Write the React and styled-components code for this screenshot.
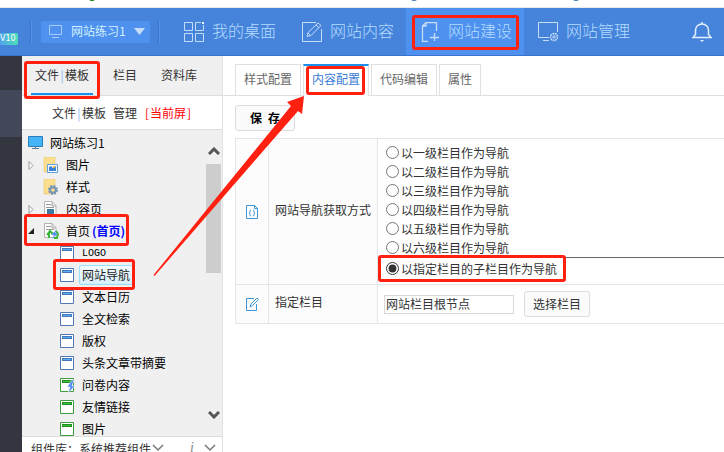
import React, { useState } from 'react'
import styled, { createGlobalStyle, css } from 'styled-components'

const navItems = [
    { key: 'desktop', label: '我的桌面' },
    { key: 'content', label: '网站内容' },
    { key: 'build', label: '网站建设' },
    { key: 'manage', label: '网站管理' },
]

const treeItems = [
    { label: '网站练习', num: '1', icon: 'monitor', level: 0 },
    { label: '图片', icon: 'images', level: 1, arrow: 'closed' },
    { label: '样式', icon: 'styles', level: 1 },
    { label: '内容页', icon: 'page', level: 1, arrow: 'closed' },
    { label: '首页', note: '(首页)', icon: 'home', level: 1, arrow: 'open', mark: '-6px 92px -4px 2px' },
    { label: 'LOGO', icon: 'blue', level: 2, mono: true },
    { label: '网站导航', icon: 'blue', level: 2, selected: true, mark: '-5px 86px -4px 31px' },
    { label: '文本日历', icon: 'blue', level: 2 },
    { label: '全文检索', icon: 'blue', level: 2 },
    { label: '版权', icon: 'blue', level: 2 },
    { label: '头条文章带摘要', icon: 'blue', level: 2 },
    { label: '问卷内容', icon: 'bolt', level: 2 },
    { label: '友情链接', icon: 'green', level: 2 },
    { label: '图片', icon: 'green', level: 2 },
]

const configTabs = ['样式配置', '内容配置', '代码编辑', '属性']

const navModes = [
    '以一级栏目作为导航',
    '以二级栏目作为导航',
    '以三级栏目作为导航',
    '以四级栏目作为导航',
    '以五级栏目作为导航',
    '以六级栏目作为导航',
]
const customMode = '以指定栏目的子栏目作为导航'

function NavIcon({ name }) {
    return (
        <svg width="20" height="20" viewBox="0 0 20 20" fill="none" stroke="#c6ddfa">
            {name === 'desktop' && (
                <>
                    <path d="M.5 .5h8v8h-8zM.5 11.5h8v8h-8zM11.5 11.5h8v8h-8zM17 .5h-5.500v8h8V3" />
                    <path d="M18 0h2v2h-2z" fill="#e8f2ff" stroke="none" />
                </>
            )}
            {name === 'content' && (
                <>
                    <path d="M14 .5H.5v19h19V7" />
                    <path d="M5 14.500l1-4L16 1l3 2.500L9 13.500zM14 3l3 3M6 11l2.500 2.500" />
                </>
            )}
            {name === 'build' && (
                <path d="M8 19.500H2.500V4L6 .5h10.500V9M6 .5V4H2.500M14.500 11v8M10 15.500h9" strokeWidth="1.3" />
            )}
            {name === 'manage' && (
                <>
                    <path d="M11 15.500H.5V.5h19V10M5 18.500h6" />
                    <circle cx="16" cy="15" r="3.500" strokeWidth="1.500" strokeDasharray="1.800 .6" />
                    <circle cx="16" cy="15" r="1.200" />
                </>
            )}
        </svg>
    )
}

function TreeIcon({ name }) {
    if (name === 'monitor') {
        return (
            <svg width="16" height="16" viewBox="0 0 16 16">
                <path d="M.5 1.500h14v10H.5z" fill="#45b5f7" stroke="#2a7fb8" />
                <path d="M7 12h1v1h3v1H4v-1h3z" fill="#5a7f9c" />
            </svg>
        )
    }
    if (name === 'images' || name === 'styles') {
        return (
            <svg width="16" height="16" viewBox="0 0 16 16">
                <path d="M1 0h11v15H1z" fill="#fbdf8e" stroke="#efcb68" strokeWidth=".6" />
                {name === 'images' ? (
                    <>
                        <path d="M4.500 7.500h10v8h-10z" fill="#fff" stroke="#5b9ee0" />
                        <path d="M6 14v-4l2-1 2 2 3-2v5z" fill="#3c83d3" />
                        <path d="M10 9h2v2h-2z" fill="#f4b14a" />
                    </>
                ) : (
                    <>
                        <circle cx="10" cy="11" r="4" fill="none" stroke="#7796b8" strokeWidth="2" strokeDasharray="1.900 1.240" />
                        <circle cx="10" cy="11" r="2.800" fill="none" stroke="#7796b8" strokeWidth="2" />
                    </>
                )}
            </svg>
        )
    }
    if (name === 'page' || name === 'home') {
        return (
            <svg width="16" height="16" viewBox="0 0 16 16">
                <path d="M1.500 .5H9l4 4v10H1.500z" fill="#fff" stroke="#b4b4b4" />
                <path d="M9 .5V5h4" fill="#ddd" stroke="#aaa" />
                <path d="M3 3.500h5M3 6.500h8" stroke="#999" />
                {name === 'page' ? (
                    <path d="M4 8h7v5H4z" fill="#3d789f" />
                ) : (
                    <>
                        <path d="M4 12l3-4 3 3M6 10v5M13 8l2 3-1 4h-3" fill="none" stroke="#38b838" strokeWidth="2" />
                        <path d="M13 7l-5 5h3l-2 4 6-6h-3z" fill="#5c8ff5" />
                    </>
                )}
            </svg>
        )
    }
    const blue = name === 'blue'
    return (
        <svg width="16" height="16" viewBox="0 0 16 16">
            <path d="M1.500 1.500h13v13h-13z" fill="#fff" stroke={blue ? '#5077b5' : '#3e9b3e'} />
            <path d="M3 3h10v3H3z" fill={blue ? '#4775b8' : '#238a23'} />
            <path d="M4 4h8v1H4z" fill={blue ? '#4eb2f5' : '#37c837'} />
            {name === 'bolt' && (
                <path d="M13 3l-5 7h3l-2 6 7-7h-3l2-6z" fill="#5c8ff5" stroke="#fff" strokeWidth=".5" />
            )}
        </svg>
    )
}

function Chevron({ up, color = '#555', stroke = 3 }) {
    return (
        <svg width="12" height="8" viewBox="0 0 12 8" fill="none" stroke={color} strokeWidth={stroke}>
            <path d={up ? 'M1 7l5-5 5 5' : 'M1 1l5 5 5-5'} />
        </svg>
    )
}

function Header() {
    return (
        <TopBar>
            <Version>V10</Version>
            <Divider />
            <SiteButton type="button">
                <svg width="14" height="13" viewBox="0 0 14 13" fill="none" stroke="#a6cbfa">
                    <path d="M.5 .5h12v9H.5zM3 12.500h7" />
                </svg>
                <span>网站练习1</span>
                <svg width="11" height="7" viewBox="0 0 11 7">
                    <path d="M0 0h11L5.500 7z" fill="#c6ddfa" />
                </svg>
            </SiteButton>
            <Divider />
            <Nav>
                {navItems.map(item => (
                    <NavLink key={item.key} href={`#${item.key}`} $active={item.key === 'build'}>
                        <NavIcon name={item.key} />
                        <NavText>{item.label}</NavText>
                        {item.key === 'build' && <Mark $inset="7px 5px 5px 6px" />}
                    </NavLink>
                ))}
            </Nav>
            <BellButton type="button" aria-label="消息">
                <svg width="20" height="20" viewBox="0 0 20 20" fill="none" stroke="#e3efff" strokeWidth="1.500">
                    <path d="M1 15.500h18l-2.500-3V8a6.500 6 0 0 0-13 0v4.500zM10 0v2" />
                    <path d="M8 18h4l-2 2z" fill="#e3efff" stroke="none" />
                </svg>
            </BellButton>
        </TopBar>
    )
}

function Sidebar() {
    return (
        <Side>
            <SideTabs>
                <SideTab type="button" $active>
                    文件<Bar>|</Bar>模板
                    <Mark $inset="5px -7px -6px -7px" />
                </SideTab>
                <SideTab type="button">栏目</SideTab>
                <SideTab type="button">资料库</SideTab>
            </SideTabs>
            <SideTitle>
                <span>文件<Bar>|</Bar>模板</span>
                <span>管理</span>
                <CurrentLink href="#screen"><Half>[</Half>当前屏<Half>]</Half></CurrentLink>
            </SideTitle>
            <TreeArea>
                <Tree>
                    {treeItems.map((item, i) => (
                        <TreeRow key={i} $level={item.level}>
                            {item.level === 1 && (
                                <Toggle>
                                    {item.arrow && (
                                        <svg width="7" height="9" viewBox="0 0 7 9">
                                            {item.arrow === 'open'
                                                ? <path d="M6 1v6H0z" fill="#222" />
                                                : <path d="M1 .5v8l4-4z" fill="#fff" stroke="#999" />}
                                        </svg>
                                    )}
                                </Toggle>
                            )}
                            <TreeIcon name={item.icon} />
                            <TreeLabel href="#node" $level={item.level} $selected={item.selected} $mono={item.mono}>
                                {item.label}
                                {item.num && <Half>{item.num}</Half>}
                                {item.note && <Note>{item.note}</Note>}
                            </TreeLabel>
                            {item.mark && <Mark $inset={item.mark} />}
                        </TreeRow>
                    ))}
                </Tree>
                <ScrollTrack>
                    <Chevron up />
                    <ScrollThumb />
                    <Chevron />
                </ScrollTrack>
            </TreeArea>
            <LibraryBar>
                <label htmlFor="library">组件库：</label>
                <LibrarySelect id="library">
                    <option>系统推荐组件</option>
                </LibrarySelect>
                <Chevron color="#777" stroke={1.5} />
                <Info>i</Info>
                <Chevron color="#777" stroke={1.5} />
            </LibraryBar>
        </Side>
    )
}

function Content() {
    const [mode, setMode] = useState(customMode)
    const option = label => (
        <>
            <input type="radio" name="mode" checked={mode === label} onChange={() => setMode(label)} />
            {label}
        </>
    )

    return (
        <Main>
            <Tabs>
                {configTabs.map(tab => (
                    <Tab key={tab} type="button" $active={tab === '内容配置'}>
                        {tab}
                        {tab === '内容配置' && <Mark $inset="0 3px 1px 2px" />}
                    </Tab>
                ))}
            </Tabs>
            <Body>
                <SaveButton type="button"><span>保</span><span>存</span></SaveButton>
                <ConfigTable>
                    <tbody>
                        <tr>
                            <IconCell>
                                <svg width="12" height="14" viewBox="0 0 12 14" fill="none" stroke="#3b97d8">
                                    <path d="M.5 .5h8l3 3v10H.5zM8.500 .5v3h3M5 5c-2 0 0 2.500-2 3 2 .5 0 3 2 3M7 5c2 0 0 2.500 2 3-2 .5 0 3-2 3" />
                                </svg>
                            </IconCell>
                            <LabelCell>网站导航获取方式</LabelCell>
                            <OptionCell>
                                {navModes.map(label => <Option key={label}>{option(label)}</Option>)}
                                <LastOption>
                                    {option(customMode)}
                                    <Mark $inset="-3px auto -4px 0" $width="188px" />
                                </LastOption>
                            </OptionCell>
                        </tr>
                        <tr>
                            <IconCell>
                                <svg width="13" height="15" viewBox="0 0 13 15" fill="none" stroke="#3b97d8">
                                    <path d="M8 1.500H.5v12h10V7" />
                                    <path d="M4 10l1-3 6-6 1.500 1.500-6 6z" />
                                </svg>
                            </IconCell>
                            <LabelCell><label htmlFor="column">指定栏目</label></LabelCell>
                            <td>
                                <Field>
                                    <TextInput id="column" defaultValue="网站栏目根节点" />
                                    <PickButton type="button">选择栏目</PickButton>
                                </Field>
                            </td>
                        </tr>
                    </tbody>
                </ConfigTable>
            </Body>
        </Main>
    )
}

function App() {
    return (
        <Page>
            <GlobalStyle />
            <Strip>
                <svg width="600" height="2" viewBox="0 0 600 2">
                    <path d="M89 0h6l-2 1h-2z" fill="#1a8a1a" />
                    <path d="M411 0h6l-2 1h-2zM573 0h6l-2 1h-2z" fill="#4a7fc8" />
                </svg>
            </Strip>
            <Header />
            <Columns>
                <Rail><RailItem /></Rail>
                <Sidebar />
                <Content />
            </Columns>
            <Arrow width="160" height="184" viewBox="150 94 160 184">
                <path d="M304 96L287 102l4 4L153.500 275l1 1L298 111l4 3z" fill="#ff2010" />
            </Arrow>
        </Page>
    )
}

export default App

const GlobalStyle = createGlobalStyle`
    * {
        box-sizing: border-box;
    }
    body {
        margin: 0;
        overflow: hidden;
        background: #fff;
    }
    body, button, input, select {
        font-family: "Noto Sans CJK SC", sans-serif;
        font-size: 12px;
        color: #333;
    }
    a {
        color: inherit;
        text-decoration: none;
    }
    svg {
        display: block;
        flex: none;
    }
`

const Page = styled.div`
    position: relative;
    display: flex;
    flex-direction: column;
    height: 100vh;
    overflow: hidden;
`

const Strip = styled.div`
    flex: none;
    height: 8px;
    border-bottom: 1px solid #e6eaf0;
`

/* red highlight drawn over its parent */
const Mark = styled.span`
    position: absolute;
    inset: ${props => props.$inset};
    width: ${props => props.$width || 'auto'};
    border: 3px solid #ff2010;
    border-radius: 3px;
    pointer-events: none;
    z-index: 2;
`

const Arrow = styled.svg`
    position: absolute;
    left: 150px;
    top: 94px;
    pointer-events: none;
    z-index: 3;
`

const TopBar = styled.header`
    display: flex;
    flex: none;
    align-items: center;
    height: 48px;
    background: #4684db;
    border-bottom: 1px solid #3874cf;
`

const Version = styled.span`
    width: 18px;
    margin: 14px 12px 0 0;
    border-radius: 0 2px 2px 0;
    background: linear-gradient(90deg, #52a5ec, #4be0b4);
    color: #fff;
    font: 8px/12px "DejaVu Sans", sans-serif;
`

const Divider = styled.span`
    width: 2px;
    height: 22px;
    background: #3a74c8;
    border-right: 1px solid #5793e6;
`

const SiteButton = styled.button`
    display: flex;
    align-items: center;
    gap: 8px;
    width: 109px;
    height: 22px;
    margin: 0 8px 0 9px;
    padding: 0 7px 0 8px;
    border: 0;
    border-radius: 2px;
    background: #4e91ee;
    color: #d4f0ff;
    line-height: 18px;
    white-space: nowrap;

    span {
        flex: 1;
        padding-bottom: 2px;
        text-align: left;
    }
`

const Nav = styled.nav`
    display: flex;
    align-self: stretch;
    margin-left: 10px;
`

const NavLink = styled.a`
    position: relative;
    display: flex;
    align-items: center;
    gap: 8px;
    width: 118px;
    padding-left: 14px;
    color: #b4dcff;
    background: ${props => (props.$active ? '#4e91ee' : 'transparent')};
`

const NavText = styled.span`
    padding-bottom: 4px;
    font-size: 16px;
    font-weight: 300;
    line-height: 24px;
    white-space: nowrap;
`

const BellButton = styled.button`
    margin: 0 12px 0 auto;
    padding: 0;
    border: 0;
    background: none;
`

const Columns = styled.div`
    display: flex;
    flex: 1;
    min-height: 0;
`

const Rail = styled.div`
    flex: none;
    width: 22px;
    padding-top: 34px;
    background: #33363f;
`

const RailItem = styled.div`
    height: 47px;
    background: #43475a;
`

const Side = styled.aside`
    display: flex;
    flex: none;
    flex-direction: column;
    width: 201px;
    border-right: 1px solid #e2e2e2;
`

const SideTabs = styled.div`
    display: flex;
    flex: none;
    gap: 16px;
    height: 40px;
    padding-left: 9px;
    background: #f0f0f0;
    border-bottom: 1px solid #dedede;
`

const SideTab = styled.button`
    position: relative;
    padding: 0 4px;
    border: 0;
    border-bottom: 2px solid ${props => (props.$active ? '#1b8fec' : 'transparent')};
    background: none;
    white-space: nowrap;
`

const Half = styled.span`
    display: inline-block;
    width: 6px;
    text-align: center;
`

const Bar = styled(Half)`
    color: #8db4ee;
`

const SideTitle = styled.div`
    display: flex;
    flex: none;
    align-items: center;
    justify-content: center;
    gap: 7px;
    height: 34px;
    border-bottom: 1px solid #dedede;
`

const CurrentLink = styled.a`
    color: #f00;
`

const TreeArea = styled.div`
    display: flex;
    flex: 1;
    min-height: 0;
    background: #f0f0f0;
`

const Tree = styled.ul`
    flex: 1;
    margin: 0;
    padding: 2px 0 0;
    list-style: none;
    overflow: hidden;
    min-width: 0;
`

const TreeRow = styled.li`
    position: relative;
    display: flex;
    align-items: center;
    height: 22px;
    padding-left: ${props => [6, 6, 37][props.$level]}px;
    margin-right: -16px;
`

const Toggle = styled.span`
    flex: none;
    width: 15px;
`

const TreeLabel = styled.a`
    display: flex;
    height: 20px;
    align-items: center;
    margin-left: ${props => [3, 4, 4][props.$level]}px;
    padding: 0 2px 2px;
    border: 1px solid transparent;
    color: #000;
    white-space: nowrap;
    ${props => props.$mono && css`
        font-family: "Liberation Mono", monospace;
        font-size: 10px;
        padding-bottom: 0;
    `}
    ${props => props.$selected && css`
        border-color: #99defd;
        border-radius: 2px;
        background: linear-gradient(#f5fcff, #d5effc);
        color: #222;
    `}
`

const Note = styled.b`
    margin-left: 2px;
    color: #00f;
`

const ScrollTrack = styled.div`
    display: flex;
    flex: none;
    flex-direction: column;
    align-items: center;
    width: 17px;
    padding: 17px 0;

    svg:last-child {
        margin-top: auto;
    }
`

const ScrollThumb = styled.div`
    width: 15px;
    height: 109px;
    margin-top: 9px;
    background: #cdcdcd;
`

const LibraryBar = styled.div`
    display: flex;
    flex: none;
    align-items: center;
    height: 16px;
    padding: 7px 6px 0 9px;
    border-top: 1px solid #dedede;
    white-space: nowrap;
`

const LibrarySelect = styled.select`
    appearance: none;
    width: 73px;
    padding: 0;
    border: 0;
    background: none;
`

const Info = styled.i`
    margin: 0 10px 0 auto;
    color: #888;
    font: italic 14px "Liberation Serif", serif;
`

const Main = styled.main`
    flex: 1;
    min-width: 0;
    padding-top: 8px;
`

const Tabs = styled.div`
    display: flex;
    gap: 2px;
    height: 32px;
    padding-left: 12px;
    border-bottom: 1px solid #e0e0e0;
`

const Tab = styled.button`
    position: relative;
    height: 31px;
    padding: 0 8px 3px;
    border: 1px solid #e0e0e0;
    border-bottom: 0;
    background: #fff;
    color: #666;
    white-space: nowrap;
    ${props => props.$active && css`
        height: 32px;
        padding-bottom: 5px;
        border-top: 2px solid #1b8fec;
        color: #3a7bd5;
    `}
`

const Body = styled.div`
    padding: 9px 0 0 12px;
`

const buttonLook = css`
    height: 26px;
    padding: 0 8px 2px;
    border: 1px solid #dcdcdc;
    border-radius: 3px;
    background: #fbfbfb;
    white-space: nowrap;
`

const SaveButton = styled.button`
    ${buttonLook}
    display: flex;
    align-items: center;
    justify-content: center;
    gap: 6px;
    width: 60px;
    color: #000;
    font-weight: 700;
`

const ConfigTable = styled.table`
    width: 100%;
    margin-top: 7px;
    border-collapse: collapse;

    td, th {
        height: 39px;
        padding: 0;
        border: 1px solid #e6e6e6;
        border-right: 0;
    }
`

const IconCell = styled.td`
    width: 33px;
    background: #fcfcfc;

    svg {
        margin: 0 auto;
    }
`

const LabelCell = styled.th`
    width: 109px;
    background: #fcfcfc;
    font-weight: 400;
    line-height: 16px;
    text-align: left;
    text-indent: 6px;
    white-space: nowrap;

    && {
        padding-bottom: 4px;
    }
`

const OptionCell = styled.td`
    vertical-align: top;
`

const Option = styled.label`
    display: flex;
    align-items: center;
    height: 19px;
    padding-left: 8px;
    line-height: 19px;
    white-space: nowrap;

    input {
        width: 13px;
        height: 13px;
        margin: 0 2px 0 0;
        accent-color: #333;
    }

    &:first-child {
        margin-top: 4px;
    }
`

const LastOption = styled(Option)`
    position: relative;
    height: 21px;
    margin-bottom: 6px;
    border-top: 1px solid #666;
`

const Field = styled.div`
    display: flex;
    align-items: center;
    gap: 10px;
    padding-left: 6px;
`

const TextInput = styled.input`
    width: 130px;
    height: 19px;
    padding: 0 1px 2px;
    border: 1px solid #d8d8d8;
`

const PickButton = styled.button`
    ${buttonLook}
`
